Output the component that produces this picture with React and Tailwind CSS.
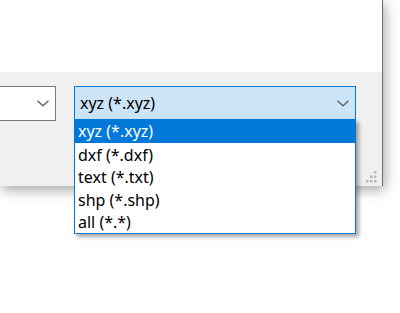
import React from "react";

const types = ["xyz (*.xyz)", "dxf (*.dxf)", "text (*.txt)", "shp (*.shp)", "all (*.*)"];
const rowHeights = ["h-[24px]", "h-[23px]", "h-[22px]", "h-[23px]", "h-[22px]"];

const Chevron = () => (
  <svg width="12" height="7" viewBox="0 0 12 7" className="shrink-0">
    <path d="M0.5 0.8 L6 5.8 L11.5 0.8" fill="none" stroke="#5f5f5f" strokeWidth="1.3" />
  </svg>
);

const Grip = () => (
  <svg width="12" height="12" viewBox="0 0 12 12">
    <g fill="#b9b9b9">
      <rect x="9" y="0" width="2.5" height="2.5" />
      <rect x="5" y="4.5" width="2.5" height="2.5" />
      <rect x="9" y="4.5" width="2.5" height="2.5" />
      <rect x="1" y="9" width="2.5" height="2.5" />
      <rect x="5" y="9" width="2.5" height="2.5" />
      <rect x="9" y="9" width="2.5" height="2.5" />
    </g>
  </svg>
);

export default function App() {
  return (
    <div
      className="w-[400px] h-[313px] bg-white overflow-hidden text-[16px] text-black"
      style={{ fontFamily: '"Noto Sans", "Open Sans", sans-serif' }}
    >
      <div className="relative w-[383px] h-[186px] flex flex-col border-r border-[#6d6d6d] bg-[#f0f0f0] shadow-[2px_4px_12px_rgba(0,0,0,0.35)]">
        {/* upper white panel */}
        <div className="h-[72px] bg-white" />

        {/* file type row */}
        <div className="flex items-start gap-[18px] pt-[14px]">
          <div className="w-[56px] h-[35px] flex items-center justify-end pr-[6px] bg-white border-y border-r border-[#7a7a7a]">
            <Chevron />
          </div>

          <div className="relative w-[282px]">
            <div className="h-[35px] flex items-center justify-between pl-[5px] pr-[6px] bg-[#cce4f7] border border-[#0078d7]">
              <span className="leading-none -mt-[1px]">xyz (*.xyz)</span>
              <Chevron />
            </div>

            {/* open list */}
            <ul className="absolute left-0 top-[33px] w-full bg-white border-x border-b border-[#0078d7] shadow-[3px_3px_4px_rgba(0,0,0,0.35)] z-10">
              {types.map((t, i) => (
                <li
                  key={t}
                  className={`${rowHeights[i]} flex items-center pl-[3px] leading-none ${
                    i === 0 ? "bg-[#0078d7] text-white" : ""
                  }`}
                >
                  {t}
                </li>
              ))}
            </ul>
          </div>
        </div>

        <div className="absolute right-[5px] bottom-[3px]">
          <Grip />
        </div>
      </div>
    </div>
  );
}
